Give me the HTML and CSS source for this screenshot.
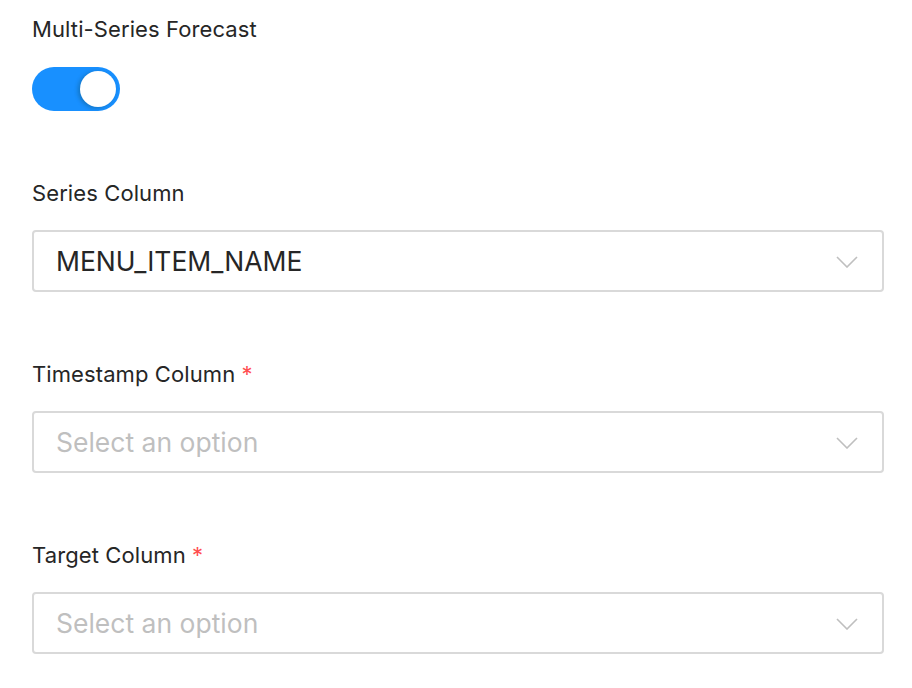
FILE: index.html
```html
<!DOCTYPE html>
<html>
<head>
<meta charset="utf-8">
<link rel="stylesheet" href="styles.css">
</head>
<body>
<div class="form">
  <div class="item item-switch">
    <div class="label">Multi-Series Forecast</div>
    <div class="switch"><span class="knob"></span></div>
  </div>
  <div class="item">
    <div class="label">Series Column</div>
    <div class="select">
      <span class="value">MENU_ITEM_NAME</span>
      <svg class="chev" width="22" height="12" viewBox="0 0 22 12"><path d="M1 1 L11 11 L21 1" fill="none" stroke="#bfbfbf" stroke-width="1.6"/></svg>
    </div>
  </div>
  <div class="item">
    <div class="label">Timestamp Column <span class="req">*</span></div>
    <div class="select">
      <span class="placeholder">Select an option</span>
      <svg class="chev" width="22" height="12" viewBox="0 0 22 12"><path d="M1 1 L11 11 L21 1" fill="none" stroke="#bfbfbf" stroke-width="1.6"/></svg>
    </div>
  </div>
  <div class="item item-last">
    <div class="label">Target Column <span class="req">*</span></div>
    <div class="select">
      <span class="placeholder">Select an option</span>
      <svg class="chev" width="22" height="12" viewBox="0 0 22 12"><path d="M1 1 L11 11 L21 1" fill="none" stroke="#bfbfbf" stroke-width="1.6"/></svg>
    </div>
  </div>
</div>
</body>
</html>
```

FILE: styles.css
```css
html, body {
  margin: 0;
  padding: 0;
  background: #ffffff;
}
body {
  font-family: Inter, "Liberation Sans", sans-serif;
  color: #262626;
}
.form {
  width: 852px;
  padding: 13px 0 0 32px;
}
.item {
  margin-bottom: 66px;
}
.item-last {
  margin-bottom: 0;
}
.label {
  font-size: 22px;
  line-height: 32px;
  height: 32px;
  margin-bottom: 21px;
  color: #262626;
  letter-spacing: 0.1px;
}
.item-switch .label {
  margin-bottom: 22px;
}
.req {
  color: #ff4d4f;
}
.switch {
  width: 88px;
  height: 44px;
  border-radius: 22px;
  background: #1890ff;
  display: flex;
  align-items: center;
  justify-content: flex-end;
  padding-right: 4px;
  box-sizing: border-box;
}
.knob {
  width: 36px;
  height: 36px;
  border-radius: 50%;
  background: #ffffff;
  box-shadow: -2px 1px 4px rgba(0, 35, 11, 0.25);
}
.select {
  height: 62px;
  box-sizing: border-box;
  border: 2px solid #d9d9d9;
  border-radius: 4px;
  display: flex;
  align-items: center;
  justify-content: space-between;
  padding: 0 24px 0 22px;
  font-size: 26.5px;
}
.value {
  color: #262626;
}
.placeholder {
  color: #bfbfbf;
}
.chev {
  display: block;
  margin-top: 2px;
}
```
